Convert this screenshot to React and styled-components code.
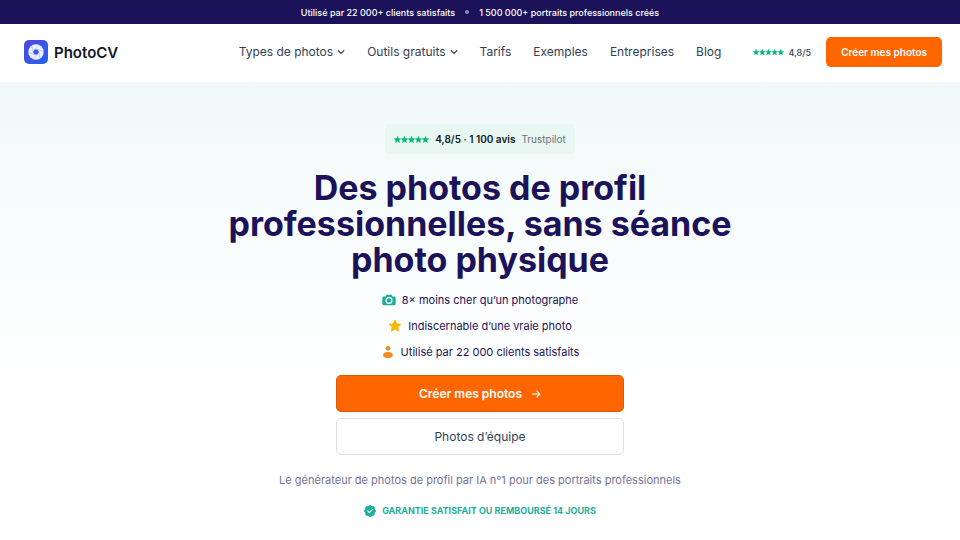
import React from 'react';
import styled, { createGlobalStyle } from 'styled-components';

const colors = {
  navy: '#1b1259',
  ink: '#0f172a',
  slate: '#334155',
  orange: '#ff6600',
  teal: '#1fae9e',
  green: '#00b67a',
};

const GlobalStyle = createGlobalStyle`
  * {
    box-sizing: border-box;
  }

  body {
    margin: 0;
    background: #fff;
    color: ${colors.navy};
    font-family: Inter, "Noto Sans", sans-serif;
    font-size: 11px;
  }

  a {
    color: inherit;
    text-decoration: none;
  }

  button {
    font: inherit;
    cursor: pointer;
  }

  svg {
    flex: none;
    display: block;
  }
`;

const TopBar = styled.div`
  display: flex;
  justify-content: center;
  align-items: center;
  gap: 10px;
  height: 24px;
  background: ${colors.navy};
  color: #fff;
  font-size: 9px;
  font-weight: 500;
`;

const Dot = styled.span`
  width: 4px;
  height: 4px;
  border-radius: 50%;
  background: #8d89ac;
`;

const Header = styled.header`
  display: grid;
  grid-template-columns: 1fr auto 1fr;
  align-items: center;
  height: 58px;
  padding: 0 18px 2px;
  background: #fff;
`;

const Brand = styled.a`
  display: flex;
  align-items: center;
  gap: 6px;
  padding-left: 6px;
  color: ${colors.ink};
  font-size: 15px;
  font-weight: 600;
`;

const Nav = styled.nav`
  display: flex;
  gap: 22px;
`;

const NavButton = styled.button`
  display: flex;
  align-items: center;
  gap: 4px;
  padding: 0;
  border: 0;
  background: none;
  color: ${colors.slate};
  font-size: 12px;
  line-height: 18px;
`;

const NavLink = styled.a`
  color: ${colors.slate};
  font-size: 12px;
  line-height: 18px;
`;

const HeaderEnd = styled.div`
  display: flex;
  justify-content: flex-end;
  align-items: center;
  gap: 15px;
`;

const Score = styled.span`
  display: flex;
  align-items: center;
  gap: 4px;
  color: ${colors.slate};
  font-size: 9px;
  font-weight: 500;
`;

const HeaderCta = styled.button`
  height: 30px;
  padding: 0 15px;
  border: 0;
  border-radius: 5px;
  background: ${colors.orange};
  color: #fff;
  font-size: 10px;
  font-weight: 600;
  white-space: nowrap;
`;

const Hero = styled.main`
  display: flex;
  flex-direction: column;
  align-items: center;
  padding: 42px 24px 20px;
  background: linear-gradient(to bottom, #f0f9f8 0, #f8fcfd 150px, #fff 310px);
`;

const Trust = styled.a`
  display: flex;
  align-items: center;
  gap: 6px;
  height: 30px;
  padding: 0 9px;
  border-radius: 4px;
  background: #e9f7f2;
  color: #6b7280;
  font-size: 10px;

  strong {
    color: ${colors.ink};
    font-weight: 600;
  }
`;

const Title = styled.h1`
  max-width: 520px;
  margin: 16px 0 0;
  font-size: 34px;
  font-weight: 700;
  line-height: 36px;
  text-align: center;
`;

const Benefits = styled.ul`
  display: flex;
  flex-direction: column;
  align-items: center;
  gap: 8px;
  margin: 13px 0 0;
  padding: 0;
  list-style: none;
`;

const Benefit = styled.li`
  display: flex;
  align-items: center;
  gap: 6px;
  font-size: 11px;
  line-height: 18px;
`;

const Actions = styled.div`
  display: flex;
  flex-direction: column;
  gap: 6px;
  width: 100%;
  max-width: 288px;
  margin-top: 14px;
`;

const ActionButton = styled.button`
  display: flex;
  justify-content: center;
  align-items: center;
  gap: 9px;
  height: 37px;
  border: 1px solid ${({ $primary }) => ($primary ? '#dc5a05' : '#dcdfe5')};
  border-radius: 5px;
  background: ${({ $primary }) => ($primary ? colors.orange : '#fff')};
  color: ${({ $primary }) => ($primary ? '#fff' : colors.slate)};
  font-size: 12px;
  font-weight: ${({ $primary }) => ($primary ? 600 : 400)};
`;

const Tagline = styled.p`
  margin: 16px 0 0;
  color: #76719b;
  font-size: 11px;
  line-height: 18px;
`;

const Guarantee = styled.p`
  display: flex;
  align-items: center;
  gap: 6px;
  margin: 15px 0 0;
  color: ${colors.teal};
  font-size: 9px;
  font-weight: 700;
  line-height: 14px;
  text-transform: uppercase;
`;

const STAR = 'M5 .4l1.300 3.300 3.500.2-2.700 2.200.9 3.400L5 7.600 2 9.500l.9-3.400L.2 3.900l3.500-.2z';

function Stars({ width }) {
  return (
    <svg width={width} viewBox="0 0 50 10" fill={colors.green} stroke={colors.green} strokeWidth=".6" role="img" aria-label="5 étoiles">
      {[0, 10, 20, 30, 40].map((x) => (
        <path key={x} d={STAR} transform={`translate(${x} 0)`} />
      ))}
    </svg>
  );
}

function Logo() {
  return (
    <svg width="24" height="24" viewBox="0 0 24 24" aria-hidden="true">
      <defs>
        <linearGradient id="brand" x1="0" y1="0" x2="1" y2="1">
          <stop offset="0" stopColor="#4f46e5" />
          <stop offset="1" stopColor="#2563eb" />
        </linearGradient>
      </defs>
      <rect width="24" height="24" rx="5" fill="url(#brand)" />
      <circle cx="12" cy="12" r="7.700" fill="#eef2ff" />
      <g stroke="#a9b8f7" strokeWidth=".6">
        {[0, 60, 120, 180, 240, 300].map((angle) => (
          <path key={angle} d="M10.500 9.400L15.500 5.300" transform={`rotate(${angle} 12 12)`} />
        ))}
      </g>
      <path d="M10.500 9.400h3l1.500 2.600-1.500 2.600h-3L9 12z" fill="#3b57e8" />
    </svg>
  );
}

function Chevron() {
  return (
    <svg width="8" height="8" viewBox="0 0 8 8" fill="none" stroke={colors.slate} strokeWidth="1.2" strokeLinecap="round" strokeLinejoin="round" aria-hidden="true">
      <path d="M1.200 2.700L4 5.400l2.800-2.700" />
    </svg>
  );
}

function CameraIcon() {
  return (
    <svg width="14" height="14" viewBox="0 0 14 14" aria-hidden="true">
      <path d="M4.600 1.800h4.800l1 1.600h1.900c.8 0 1.400.6 1.400 1.400v6c0 .8-.6 1.400-1.400 1.400H1.700c-.8 0-1.400-.6-1.400-1.400v-6c0-.8.6-1.400 1.400-1.400h1.900z" fill={colors.teal} />
      <circle cx="7" cy="7.500" r="2.900" fill={colors.teal} stroke="#fff" strokeWidth="1.200" />
    </svg>
  );
}

function StarIcon() {
  return (
    <svg width="14" height="14" viewBox="0 0 14 14" aria-hidden="true">
      <path d="M7 1.200l1.700 3.700 4 .4-3 2.700.9 4L7 10l-3.600 2 .9-4-3-2.700 4-.4z" fill="#ffb800" stroke="#ffb800" strokeLinejoin="round" />
    </svg>
  );
}

function PersonIcon() {
  return (
    <svg width="14" height="14" viewBox="0 0 14 14" fill="#f08a24" aria-hidden="true">
      <circle cx="7" cy="3.300" r="2.400" />
      <ellipse cx="7" cy="10" rx="4.900" ry="3" />
    </svg>
  );
}

function ArrowIcon() {
  return (
    <svg width="10" height="10" viewBox="0 0 10 10" fill="none" stroke="#fff" strokeWidth="1.200" strokeLinecap="round" strokeLinejoin="round" aria-hidden="true">
      <path d="M1.500 5h7M5.900 2.200L8.700 5 5.900 7.800" />
    </svg>
  );
}

function SealIcon() {
  return (
    <svg width="12" height="12" viewBox="0 0 12 12" aria-hidden="true">
      <g fill={colors.teal}>
        <circle cx="6" cy="6" r="5" />
        {[0, 45, 90, 135, 180, 225, 270, 315].map((angle) => (
          <circle key={angle} cx="6" cy="1.800" r="1.800" transform={`rotate(${angle} 6 6)`} />
        ))}
      </g>
      <path d="M3.800 6.200l1.600 1.500 2.900-3.100" fill="none" stroke="#fff" strokeWidth="1.100" strokeLinecap="round" strokeLinejoin="round" />
    </svg>
  );
}

const menus = ['Types de photos', 'Outils gratuits'];
const links = ['Tarifs', 'Exemples', 'Entreprises', 'Blog'];

const benefits = [
  { icon: <CameraIcon />, text: '8× moins cher qu’un photographe' },
  { icon: <StarIcon />, text: 'Indiscernable d’une vraie photo' },
  { icon: <PersonIcon />, text: 'Utilisé par 22 000 clients satisfaits' },
];

export default function App() {
  return (
    <>
      <GlobalStyle />

      <TopBar>
        <span>Utilisé par 22 000+ clients satisfaits</span>
        <Dot />
        <span>1 500 000+ portraits professionnels créés</span>
      </TopBar>

      <Header>
        <Brand href="#">
          <Logo />
          PhotoCV
        </Brand>

        <Nav>
          {menus.map((label) => (
            <NavButton key={label} type="button" aria-haspopup="true">
              {label}
              <Chevron />
            </NavButton>
          ))}
          {links.map((label) => (
            <NavLink key={label} href="#">{label}</NavLink>
          ))}
        </Nav>

        <HeaderEnd>
          <Score>
            <Stars width={31} />
            4,8/5
          </Score>
          <HeaderCta type="button">Créer mes photos</HeaderCta>
        </HeaderEnd>
      </Header>

      <Hero>
        <Trust href="#">
          <Stars width={35} />
          <strong>4,8/5 · 1 100 avis</strong>
          <span>Trustpilot</span>
        </Trust>

        <Title>Des photos de profil professionnelles, sans séance photo physique</Title>

        <Benefits>
          {benefits.map(({ icon, text }) => (
            <Benefit key={text}>
              {icon}
              {text}
            </Benefit>
          ))}
        </Benefits>

        <Actions>
          <ActionButton type="button" $primary>
            Créer mes photos
            <ArrowIcon />
          </ActionButton>
          <ActionButton type="button">Photos d’équipe</ActionButton>
        </Actions>

        <Tagline>Le générateur de photos de profil par IA n°1 pour des portraits professionnels</Tagline>

        <Guarantee>
          <SealIcon />
          Garantie satisfait ou remboursé 14 jours
        </Guarantee>
      </Hero>
    </>
  );
}
